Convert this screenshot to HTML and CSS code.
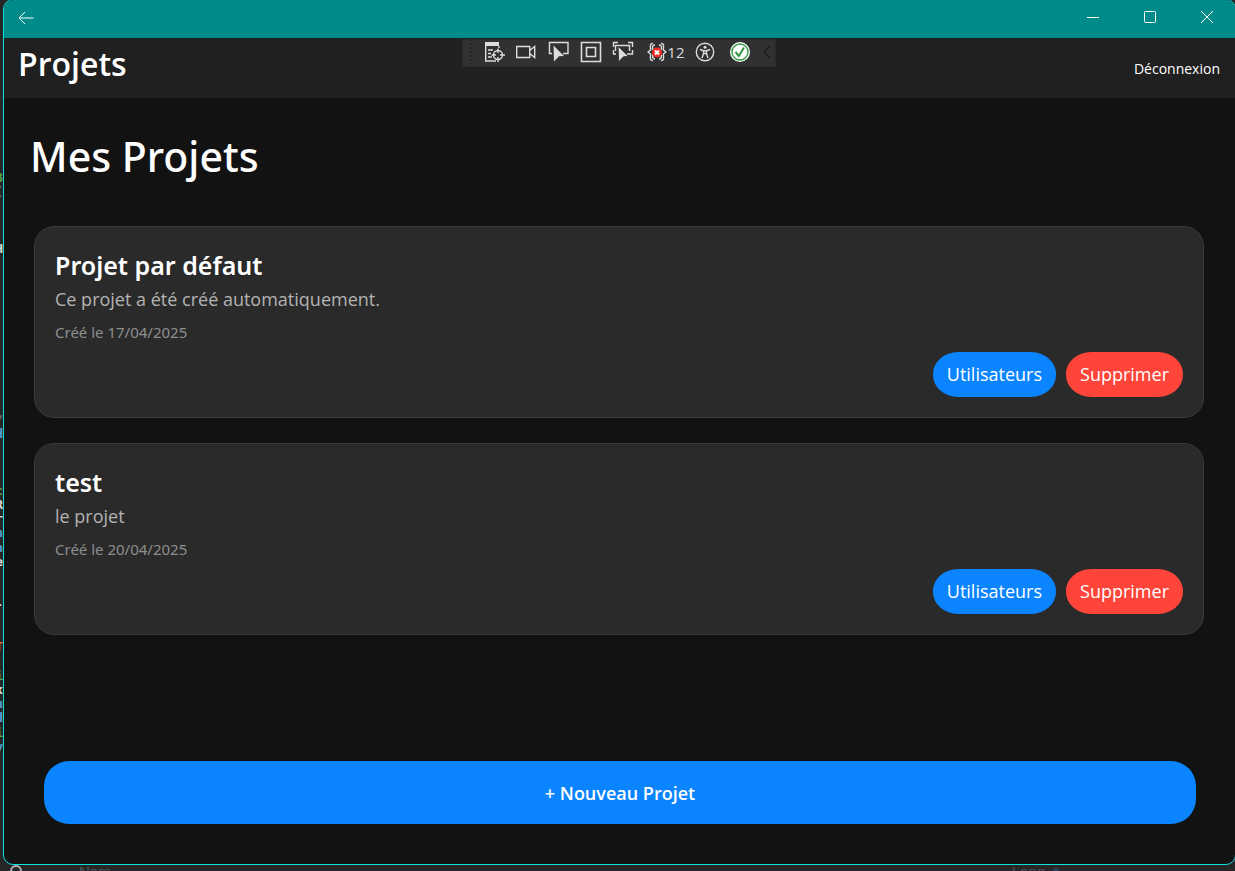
FILE: index.html
```html
<!DOCTYPE html>
<html lang="fr">
<head>
<meta charset="utf-8">
<title>Projets</title>
<link rel="stylesheet" href="styles.css">
</head>
<body>
<div class="editor" aria-hidden="true">
  <span class="green">3</span><span class="blue">(</span><span></span><span></span><span></span><span class="light">H</span><span></span><span></span><span></span><span></span><span></span><span></span><span></span><span></span><span></span><span></span><span></span><span class="dim">/</span><span class="blue">d</span><span></span><span></span><span></span><span class="green">c</span><span class="light">R</span><span class="light">r</span><span class="blue">n</span><span class="blue">n</span><span class="light">e</span><span></span><span></span><span class="light">-</span><span></span><span></span><span class="orange">T</span><span></span><span class="green">i</span><span class="light">x</span><span class="blue">u</span><span class="blue">d</span><span class="green">i</span><span class="blue">y</span>
</div>
<div class="window">
  <div class="titlebar">
    <button class="caption" aria-label="Retour">
      <svg width="16" height="14" viewBox="0 0 16 14"><path d="M15.500 7H1M7 1L1 7l6 6"/></svg>
    </button>
    <div class="captions">
      <button class="caption" aria-label="Réduire"><svg width="12" height="12" viewBox="0 0 12 12"><path d="M0 6.500h12"/></svg></button>
      <button class="caption" aria-label="Agrandir"><svg width="12" height="12" viewBox="0 0 12 12"><rect x=".5" y=".5" width="11" height="11" rx="1"/></svg></button>
      <button class="caption" aria-label="Fermer"><svg width="12" height="12" viewBox="0 0 12 12"><path d="M0 0l12 12M12 0L0 12"/></svg></button>
    </div>
  </div>
  <header class="header">
    <div class="header-title">Projets</div>
    <button class="logout">Déconnexion</button>
  </header>
  <div class="debugbar" role="toolbar" aria-label="Outils de débogage">
    <span class="grip"></span>
    <button class="tool" aria-label="Arborescence visuelle"><svg width="22" height="22" viewBox="0 0 22 22"><path class="fill" d="M1 1h14v4H1z"/><path d="M1.700 4v16H12M15 5v2M4 9h5M4 12.500h3M4 16h4"/><circle cx="14" cy="14" r="4.500"/><path d="M14 7.500v4.500M14 16v5M7.500 14H12M16 14h5"/></svg></button>
    <button class="tool" aria-label="Caméra"><svg width="22" height="22" viewBox="0 0 22 22"><path d="M.700 5.500h13v11h-13zM13.700 9.500l5-4v11l-5-4"/></svg></button>
    <button class="tool" aria-label="Sélectionner"><svg width="22" height="22" viewBox="0 0 22 22"><path d="M4 12.500H1.500V1.500h18.500v11h-5"/><path class="fill" d="M5.500 4.500L16 15l-5 .3L6 20.500z"/></svg></button>
    <button class="tool" aria-label="Mise en page"><svg width="22" height="22" viewBox="0 0 22 22"><path d="M1.500 1.500h19v19h-19zM6.500 6.500h9v9h-9z" stroke-width="1.600"/></svg></button>
    <button class="tool" aria-label="Suivre l'élément"><svg width="22" height="22" viewBox="0 0 22 22"><path d="M1.500 6V1.500H6M16 1.500h4.500V6M1.500 9v4H4M20.500 9v4H15M3.500 10V4.500h14V10"/><path class="fill halo" d="M6 5l10.500 10.500-5 .3L6.500 21z"/></svg></button>
    <button class="tool errors" aria-label="Erreurs de liaison : 12"><svg width="20" height="22" viewBox="0 0 20 22"><path d="M6 2.500C2 2 4 7 3.500 9L1 11l2.500 2c.5 2-1.500 7 2.500 6.500M14 2.500c4-.5 2 4.500 2.500 6.500l2.500 2-2.500 2c-.5 2 1.500 7-2.500 6.500M8 4C4.500 4 6 7 5.500 9M12 4c3.500 0 2 3 2.500 5M8 18c-3 0-2-2-2.500-4M12 18c3 0 2-2 2.500-4"/><circle class="error" cx="10" cy="11.500" r="5"/><path class="cross" d="M8 9.500l4 4M12 9.500l-4 4"/></svg><span>12</span></button>
    <button class="tool" aria-label="Accessibilité"><svg width="20" height="22" viewBox="0 0 20 22"><circle cx="10" cy="11" r="8.700"/><circle class="fill" cx="10" cy="6.300" r="1.500"/><path d="M5 8.500l3.500 1.200h3L15 8.500M8.500 9.700v3L7 17M11.500 9.700v3L13 17M8.500 12.500h3"/></svg></button>
    <button class="tool reload" aria-label="Rechargement à chaud"><svg width="20" height="22" viewBox="0 0 20 22"><circle class="white" cx="10" cy="11" r="10"/><circle class="ok" cx="10" cy="11" r="8"/><path class="check" d="M5.500 11l3.300 4L14 6.500"/></svg></button>
    <button class="tool dark" aria-label="Replier"><svg width="8" height="14" viewBox="0 0 8 14"><path d="M7 1L1 7l6 6"/></svg></button>
  </div>
  <main class="main">
    <h1 class="page-title">Mes Projets</h1>
    <div class="cards">
      <article class="card">
        <h2 class="card-title">Projet par défaut</h2>
        <p class="card-text">Ce projet a été créé automatiquement.</p>
        <p class="card-date">Créé le 17/04/2025</p>
        <div class="actions"><button class="pill">Utilisateurs</button><button class="pill danger">Supprimer</button></div>
      </article>
      <article class="card">
        <h2 class="card-title">test</h2>
        <p class="card-text">le projet</p>
        <p class="card-date">Créé le 20/04/2025</p>
        <div class="actions"><button class="pill">Utilisateurs</button><button class="pill danger">Supprimer</button></div>
      </article>
    </div>
    <button class="new-project">+ Nouveau Projet</button>
  </main>
</div>
<div class="behind" aria-hidden="true"><span class="bulb"></span><span class="col-name">Nom</span><span class="col-lang">Lang</span><span class="sort"></span></div>
</body>
</html>
```
FILE: styles.css
```css
* { box-sizing: border-box; }
body {
  margin: 0;
  height: 100vh;
  display: flex;
  flex-direction: column;
  overflow: hidden;
  background: #252627;
  color: #fff;
  font-family: "Noto Sans", sans-serif;
}
button { border: 0; margin: 0; padding: 0; background: none; color: inherit; font: inherit; }
h1, h2, p { margin: 0; }
svg { display: block; fill: none; stroke: currentColor; }

.editor {
  position: absolute;
  top: 171px;
  left: 0;
  width: 3px;
  height: 583px;
  display: grid;
  grid-auto-rows: 1fr;
  overflow: hidden;
  font: 700 13px/14px "DejaVu Sans Mono", monospace;
}
.editor span { display: flex; justify-content: flex-end; width: 3px; }
.green { color: #57a64a; }
.blue { color: #569cd6; }
.light { color: #dcdcdc; }
.orange { color: #d0703c; }
.dim { color: #777; }

.window {
  position: relative;
  flex: 1;
  display: flex;
  flex-direction: column;
  margin: -1px -1px 0 3px;
  border: 1px solid #13e0da;
  border-radius: 10px;
  overflow: hidden;
  background: #121212;
}
.titlebar {
  display: flex;
  justify-content: space-between;
  height: 38px;
  padding-left: 14px;
  background: #008b8b;
}
.captions { display: flex; }
.caption { display: flex; align-items: center; padding-bottom: 3px; }
.captions .caption { width: 57px; justify-content: center; padding-bottom: 4px; }

.header {
  display: flex;
  align-items: center;
  justify-content: space-between;
  height: 60px;
  padding: 0 15px 0 14px;
  background: #202020;
}
.header-title { padding-bottom: 8px; font: 600 32px/48px "Open Sans", sans-serif; }
.logout { padding-top: 2px; font: 14px/20px "Open Sans", sans-serif; }

.debugbar {
  position: absolute;
  top: 39px;
  left: 50%;
  width: 314px;
  height: 28px;
  margin-left: -158px;
  padding: 0 4px 2px 6px;
  display: flex;
  align-items: center;
  gap: 10px;
  background: #303133;
  border: 1px solid #28292a;
  color: #ddd;
}
.grip {
  width: 6px;
  height: 20px;
  background: radial-gradient(circle, #232425 1px, transparent 1px) 0 0 / 4px 4px;
}
.tool svg { stroke-width: 1.4; }
.errors { display: flex; align-items: center; margin-left: 3px; font: 15px/20px "Open Sans", sans-serif; }
.reload { margin-left: 5px; }
.dark { margin-left: 3px; color: #1b1b1b; }
.fill { fill: currentColor; stroke: none; }
.halo { stroke: #303133; stroke-width: 1; }
.error { fill: #f32b20; stroke: none; }
.cross { stroke: #fff; stroke-width: 2; }
.white { fill: #fff; stroke: none; }
.ok { stroke: #379b43; }
.check { stroke: #2f963b; stroke-width: 2; }

.main { flex: 1; display: flex; flex-direction: column; padding: 30px 31px 30px 30px; }
.page-title { margin-left: -4px; font-size: 41px; font-weight: 500; line-height: 56px; }
.cards { display: grid; gap: 25px; margin-top: 42px; }
.card {
  padding: 20px;
  border: 1px solid #3a3a3a;
  border-radius: 20px;
  background: #2a2a2a;
}
.card-title { font-size: 25px; font-weight: 600; line-height: 37px; }
.card-text { font: 18px/30px "Open Sans", sans-serif; color: #b3b3b3; }
.card-date { margin: 9px 0 10px; font-size: 15px; line-height: 19px; color: #8e8e8e; }
.actions { display: flex; justify-content: flex-end; gap: 10px; }
.pill {
  height: 45px;
  padding: 0 14px 2px;
  border-radius: 25px / 22px;
  background: #0a84ff;
  font: 18px/24px "Open Sans", sans-serif;
}
.danger { background: #ff453a; }
.new-project {
  height: 63px;
  margin: auto 8px 10px 10px;
  border-radius: 25px;
  background: #0a84ff;
  font: 600 18px/24px "Open Sans", sans-serif;
}

.behind {
  display: flex;
  height: 6px;
  overflow: hidden;
  font: 15px/14px "Liberation Sans", sans-serif;
  color: #4e5052;
}
.bulb {
  width: 12px;
  height: 12px;
  margin-left: 10px;
  border: 2px solid #b0b0b0;
  border-radius: 50%;
}
.col-name { margin-left: 57px; }
.col-lang { margin-left: auto; }
.sort {
  margin: 1px 175px 0 7px;
  border: 4px solid transparent;
  border-top: 0;
  border-bottom-color: #2b4258;
}
```
